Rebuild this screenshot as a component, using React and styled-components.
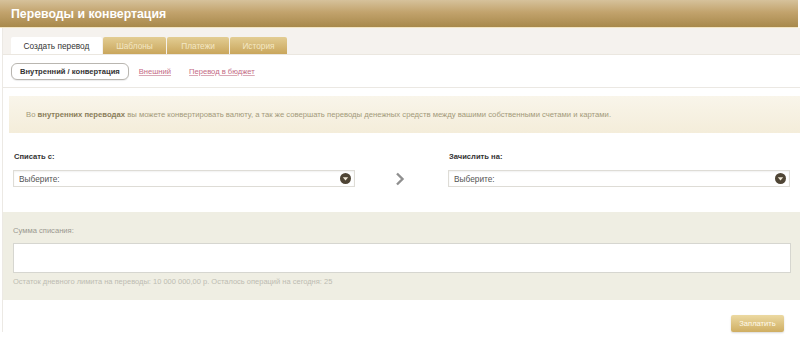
import React from "react";
import styled, { createGlobalStyle } from "styled-components";

const Global = createGlobalStyle`
  html, body { margin: 0; padding: 0; background: #fff; }
  body { font-family: "Liberation Sans", Arial, sans-serif; }
  * { box-sizing: border-box; }
`;

const Page = styled.div`
  width: 800px;
  height: 339px;
  overflow: hidden;
  background: #fff;
`;

const Header = styled.div`
  height: 28px;
  margin-right: 2px;
  background: linear-gradient(#d6c29b 0%, #c2a36d 45%, #a8894b 100%);
  border-bottom: 1px solid #f3e6c4;
  display: flex;
  align-items: center;
  padding-left: 11px;
`;

const Title = styled.h1`
  margin: 0;
  font-size: 12.3px;
  font-weight: bold;
  color: #fff;
`;

const Body = styled.div`
  border-left: 1px solid #ece9e4;
  margin-left: 2px;
`;

const TabBand = styled.div`
  height: 27px;
  background: #f5f2ee;
  border-bottom: 1px solid #ebe7e0;
  display: flex;
  align-items: flex-end;
  padding-left: 8px;
`;

const Tab = styled.div`
  height: 17px;
  display: flex;
  align-items: center;
  justify-content: center;
  width: ${(p) => p.$w}px;
  margin-right: 1px;
  font-size: 8.3px;
  border-radius: 2px 2px 0 0;
  color: ${(p) => (p.$active ? "#333" : "#f3e7c4")};
  background: ${(p) =>
    p.$active ? "#fff" : "linear-gradient(#e3cd93, #c9a65c)"};
`;

const SubTabs = styled.div`
  height: 33px;
  display: flex;
  align-items: center;
  padding-left: 8px;
  gap: 10px;
  border-bottom: 1px solid #ebe8e3;
`;

const Pill = styled.div`
  height: 17px;
  padding: 0 8px;
  display: flex;
  align-items: center;
  border: 1px solid #b9b6b0;
  border-radius: 6px;
  font-size: 7.6px;
  font-weight: bold;
  color: #333;
  background: #fff;
  box-shadow: 0 1px 1px rgba(0,0,0,0.08);
`;

const SubLink = styled.a`
  font-size: 7.6px;
  color: #c46a85;
  text-decoration: underline;
  text-decoration-color: #d9a9b6;
  margin-left: ${(p) => p.$ml || 0}px;
`;

const Info = styled.div`
  margin: 8px 0 0 6px;
  height: 37px;
  background: linear-gradient(#f9f5ea, #f4edda);
  display: flex;
  align-items: center;
  padding-left: 17px;
  font-size: 7.7px;
  color: #a39a7a;
  b { color: #8a7e5a; }
`;

const Row = styled.div`
  display: grid;
  grid-template-columns: 342px 93px 342px;
  padding: 19px 0 0 10px;
`;

const Field = styled.div`
  display: flex;
  flex-direction: column;
`;

const Label = styled.div`
  font-size: 7.6px;
  font-weight: bold;
  color: #333;
  margin-left: 1px;
  margin-bottom: 9px;
`;

const Select = styled.div`
  height: 17px;
  border: 1px solid #dedcd6;
  box-shadow: inset 0 1px 2px rgba(0,0,0,0.06);
  display: flex;
  align-items: center;
  justify-content: space-between;
  padding: 0 3px 0 5px;
  font-size: 8.3px;
  color: #555;
`;

const Arrow = styled.div`
  display: flex;
  align-items: flex-end;
  justify-content: center;
  padding-bottom: 1px;
  padding-right: 3px;
`;

const AmountPanel = styled.div`
  margin-top: 25px;
  height: 88px;
  background: #efeee3;
  padding: 14px 9px 0 10px;
`;

const AmountLabel = styled.div`
  font-size: 7.6px;
  color: #9a9890;
  margin-bottom: 8px;
`;

const Input = styled.div`
  height: 30px;
  background: #fff;
  border: 1px solid #d6d6d0;
`;

const Hint = styled.div`
  font-size: 7.5px;
  color: #bdbcb2;
  margin-top: 4px;
`;

const Footer = styled.div`
  display: flex;
  justify-content: flex-end;
  padding: 15px 16px 0 0;
`;

const PayButton = styled.div`
  height: 17px;
  width: 53px;
  border-radius: 2px;
  background: linear-gradient(#ecd9a2, #cfae62);
  box-shadow: 0 1px 2px rgba(0,0,0,0.15);
  display: flex;
  align-items: center;
  justify-content: center;
  font-size: 7.6px;
  color: #fffaeb;
`;

const DropIcon = () => (
  <svg width="11" height="11" viewBox="0 0 11 11">
    <circle cx="5.5" cy="5.5" r="5.5" fill="#4f4535" />
    <path d="M2.8 4.2 L8.2 4.2 L5.5 7.4 Z" fill="#f1ead8" />
  </svg>
);

const Chevron = () => (
  <svg width="10" height="14" viewBox="0 0 10 14">
    <path d="M2 1.5 L7.5 7 L2 12.5" stroke="#8f8f8f" strokeWidth="2.4" fill="none" />
  </svg>
);

export default function App() {
  return (
    <Page>
      <Global />
      <Header>
        <Title>Переводы и конвертация</Title>
      </Header>
      <Body>
        <TabBand>
          <Tab $active $w={91}>Создать перевод</Tab>
          <Tab $w={63}>Шаблоны</Tab>
          <Tab $w={62}>Платежи</Tab>
          <Tab $w={57}>История</Tab>
        </TabBand>
        <SubTabs>
          <Pill>Внутренний / конвертация</Pill>
          <SubLink>Внешний</SubLink>
          <SubLink $ml={8}>Перевод в бюджет</SubLink>
        </SubTabs>
        <Info>
          <span>
            Во <b>внутренних переводах</b> вы можете конвертировать валюту, а так же совершать переводы денежных средств между вашими собственными счетами и картами.
          </span>
        </Info>
        <Row>
          <Field>
            <Label>Списать с:</Label>
            <Select>
              <span>Выберите:</span>
              <DropIcon />
            </Select>
          </Field>
          <Arrow>
            <Chevron />
          </Arrow>
          <Field>
            <Label>Зачислить на:</Label>
            <Select>
              <span>Выберите:</span>
              <DropIcon />
            </Select>
          </Field>
        </Row>
        <AmountPanel>
          <AmountLabel>Сумма списания:</AmountLabel>
          <Input />
          <Hint>Остаток дневного лимита на переводы: 10 000 000,00 р. Осталось операций на сегодня: 25</Hint>
        </AmountPanel>
        <Footer>
          <PayButton>Заплатить</PayButton>
        </Footer>
      </Body>
    </Page>
  );
}
